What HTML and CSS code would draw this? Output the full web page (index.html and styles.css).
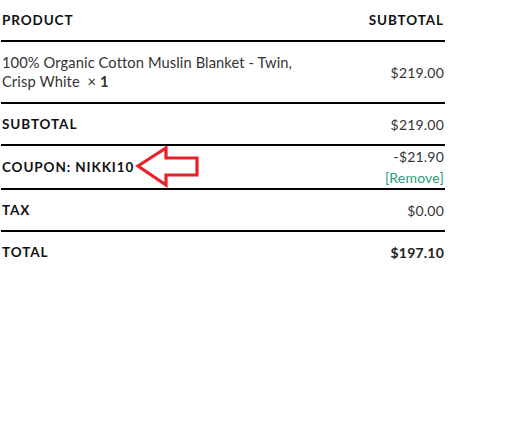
FILE: index.html
```html
<!DOCTYPE html>
<html>
<head>
  <title>Order Review</title>
  <link rel="stylesheet" href="styles.css">
</head>
<body>

  <div class="order">
    <div class="row head">
      <span class="label">Product</span>
      <span class="label">Subtotal</span>
    </div>
    <div class="row item">
      <span class="name">100% Organic Cotton Muslin Blanket - Twin,<br>Crisp White <span class="qty">&times;&nbsp;<b>1</b></span></span>
      <span class="amount">$219.00</span>
    </div>
    <div class="row">
      <span class="label">Subtotal</span>
      <span class="amount">$219.00</span>
    </div>
    <div class="row coupon">
      <span class="label">Coupon: NIKKI10</span>
      <span class="amount">-$21.90<br><a class="remove" href="#">[Remove]</a></span>
      <!-- annotation arrow -->
      <svg class="arrow" width="80" height="46" viewBox="0 0 80 46">
        <polygon points="7,20 35,2 35,12 66,12 66,29 35,29 35,39" fill="none" stroke="#e8212b" stroke-width="3.2" stroke-linejoin="miter"/>
      </svg>
    </div>
    <div class="row">
      <span class="label">Tax</span>
      <span class="amount">$0.00</span>
    </div>
    <div class="row total">
      <span class="label">Total</span>
      <span class="amount">$197.10</span>
    </div>
  </div>

</body>
</html>
```

FILE: styles.css
```css
body {
  margin: 0;
  background-color: #fff;
  font-family: "Lato", "Open Sans", sans-serif;
  color: #333;
}

.order {
  width: 444px;
  margin-left: 1px;
}

.row {
  display: flex;
  justify-content: space-between;
  align-items: center;
  height: 40px;
  padding: 0 1px;
  border-bottom: 2px solid #000;
}

.row.item {
  height: 60px;
}

.row.coupon {
  position: relative;
  height: 42px;
}

.row.total {
  border-bottom: none;
}

.label {
  font-size: 13.5px;
  font-weight: 700;
  letter-spacing: 0.9px;
  text-transform: uppercase;
  color: #111;
}

.name {
  font-size: 14.7px;
  line-height: 19px;
  letter-spacing: 0.1px;
}

.qty {
  margin-left: 4px;
}

.qty b {
  font-weight: 700;
}

.amount {
  font-size: 14px;
  line-height: 21px;
  text-align: right;
  letter-spacing: 0.2px;
}

.total .amount {
  font-weight: 700;
  color: #222;
}

.remove {
  color: #1f9f78;
  text-decoration: none;
}

.arrow {
  position: absolute;
  left: 130px;
  top: 0;
}
```
